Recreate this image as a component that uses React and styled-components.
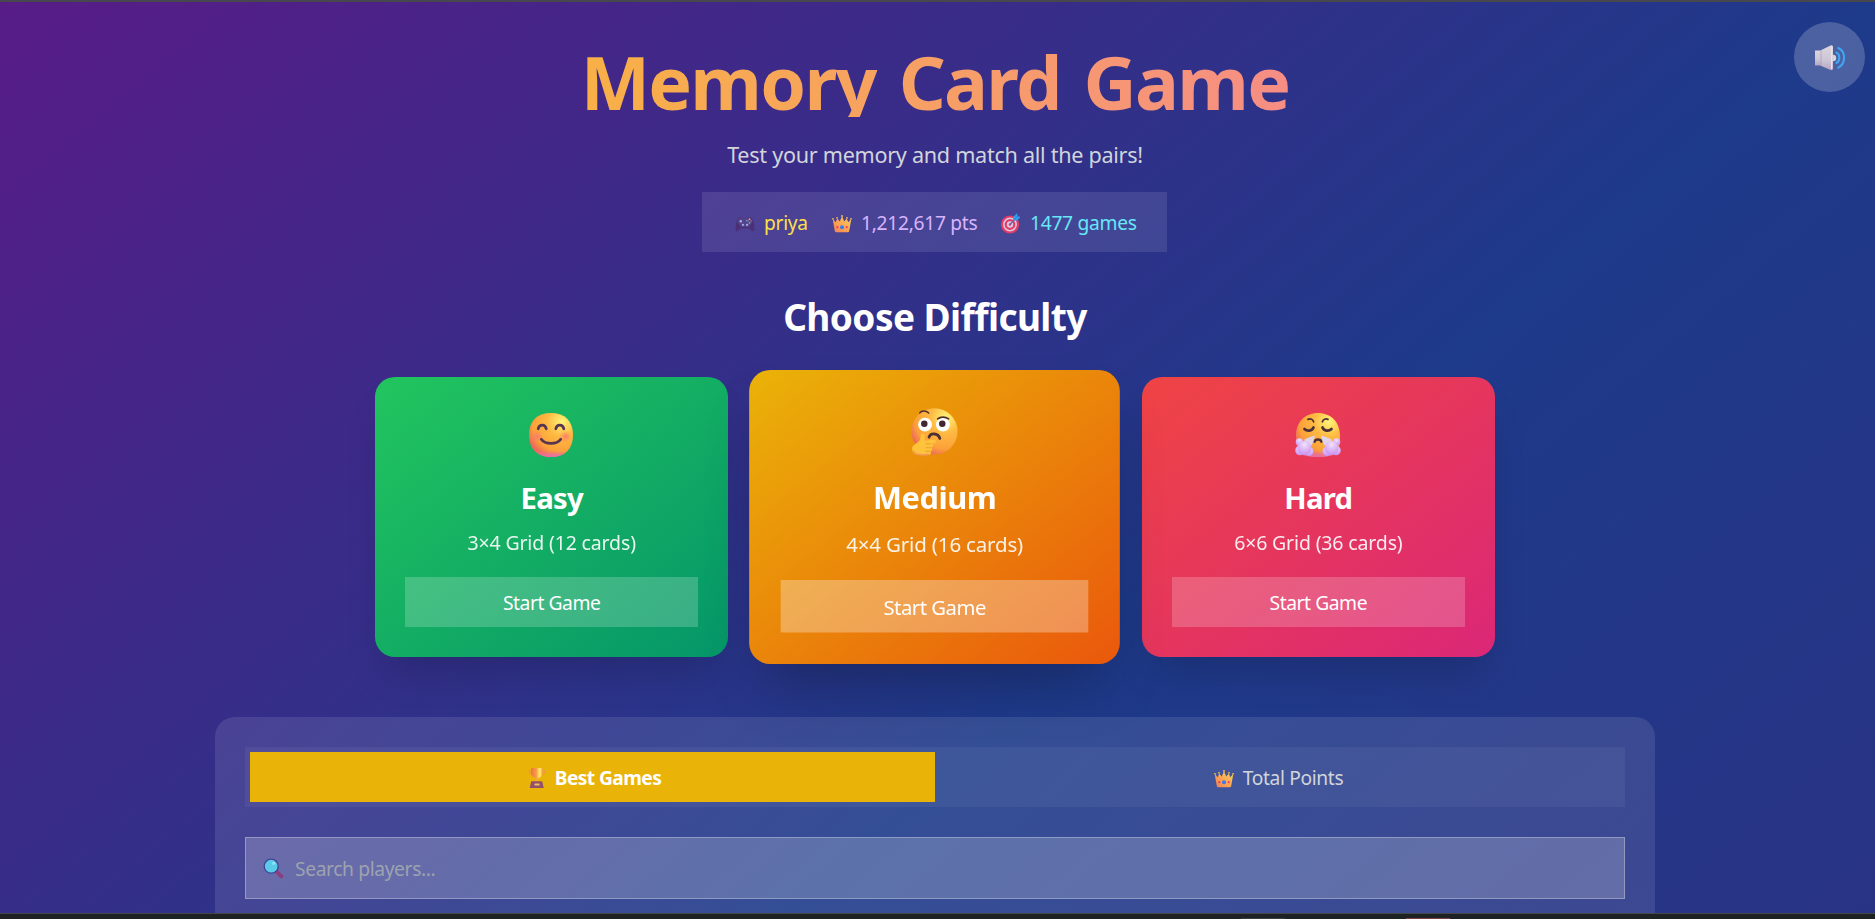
import React from 'react';
import styled, { createGlobalStyle } from 'styled-components';

const GlobalStyle = createGlobalStyle`
  * { box-sizing: border-box; }
  body {
    margin: 0;
    overflow: hidden;
    background: #1f2223;
    color: #fff;
    font-family: "Segoe UI", "Noto Sans", "Open Sans", sans-serif;
  }
  h1, h2, h3, p { margin: 0; }
  button, input { font-family: inherit; border: 0; }
`;

const Window = styled.div`
  height: 919px;
  display: flex;
  flex-direction: column;
  overflow: hidden;
`;

const TopEdge = styled.div`
  flex: none;
  height: 2px;
  background: #46484d;
`;

const Taskbar = styled.footer`
  flex: none;
  height: 6px;
  padding: 4px 425px 0 1241px;
  display: flex;
  justify-content: space-between;
  border-top: 1px solid #45474a;
  background: #1f2223;
`;

const TaskMark = styled.span`
  width: 44px;
  height: 1px;
  background: ${(p) => p.$color};
`;

const Page = styled.main`
  flex: 1;
  min-height: 0;
  overflow: hidden;
  padding: 40px 25px 0 20px;
  display: flex;
  flex-direction: column;
  align-items: center;
  background: linear-gradient(to bottom right, #581c87, #1e3a8a, #312e81) 0 0 / 1875px 1560px no-repeat;
`;

const Title = styled.h1`
  flex: none;
  width: 100%;
  height: 75px;
  margin-bottom: 20px;
  line-height: 80px;
  font-size: 73.5px;
  font-weight: 700;
  letter-spacing: -1.75px;
  word-spacing: 5.5px;
  text-align: center;
  color: transparent;
  background: linear-gradient(to right, #facc15, #f472b6);
  background-clip: text;
  -webkit-background-clip: text;
`;

const Subtitle = styled.p`
  height: 35px;
  margin-bottom: 20px;
  line-height: 35px;
  font-size: 21.6px;
  letter-spacing: -0.28px;
  color: #d1d5db;
`;

const Stats = styled.div`
  flex: none;
  width: 465px;
  height: 60px;
  margin-bottom: 40px;
  margin-right: 1px;
  padding: 1px 0 0 33px;
  display: flex;
  align-items: center;
  background: rgba(255, 255, 255, 0.1);
`;

const Stat = styled.div`
  width: ${(p) => p.$width}px;
  display: flex;
  align-items: center;
  gap: 9px;
  font-size: 19.2px;
  line-height: 30px;
  letter-spacing: -0.28px;
  white-space: nowrap;
  color: ${(p) => p.$color};
`;

const Heading = styled.h2`
  flex: none;
  height: 45px;
  margin-bottom: 40px;
  line-height: 49px;
  font-size: 37px;
  font-weight: 700;
  letter-spacing: -0.58px;
`;

const Cards = styled.section`
  flex: none;
  width: 1120px;
  margin-bottom: 60px;
  display: grid;
  grid-template-columns: repeat(3, 1fr);
  gap: 30px;
`;

const Card = styled.article`
  height: 280px;
  padding: 30px;
  display: flex;
  flex-direction: column;
  align-items: center;
  border-radius: 20px;
  background: linear-gradient(to bottom right, ${(p) => p.$from}, ${(p) => p.$to});
  box-shadow: ${(p) =>
    p.$featured
      ? '0 31px 56px -16px rgba(0, 0, 0, 0.29)'
      : '0 25px 40px -12px rgba(0, 0, 0, 0.18)'};
  transform: ${(p) => (p.$featured ? 'scale(1.05)' : 'none')};
`;

const Face = styled.div`
  height: 50px;
  margin-bottom: 20px;
  padding: ${(p) => (p.$featured ? 6 : 5)}px 1px 0 0;
  svg { display: block; }
`;

const Level = styled.h3`
  height: 40px;
  margin-bottom: 10px;
  line-height: 43px;
  font-size: 29.3px;
  font-weight: 700;
  letter-spacing: ${(p) => (p.$featured ? -0.45 : -0.75)}px;
`;

const Grid = styled.p`
  height: 30px;
  margin-bottom: 20px;
  line-height: 31px;
  font-size: 19.5px;
  letter-spacing: -0.15px;
  opacity: 0.9;
`;

const StartButton = styled.button`
  width: 100%;
  height: 50px;
  padding: 1px 0 0;
  font-size: 19.3px;
  letter-spacing: -0.45px;
  color: #fff;
  background: rgba(255, 255, 255, ${(p) => (p.$featured ? 0.3 : 0.2)});
`;

const Board = styled.section`
  flex: none;
  width: 1440px;
  height: 600px;
  padding: 30px;
  border-radius: 20px;
  background: rgba(255, 255, 255, 0.1);
`;

const Tabs = styled.div`
  height: 60px;
  margin-bottom: 30px;
  padding: 5px;
  display: grid;
  grid-template-columns: 1fr 1fr;
  background: rgba(255, 255, 255, 0.05);
`;

const Tab = styled.button`
  padding: 1px 0 0 ${(p) => (p.$active ? 4 : 2)}px;
  display: flex;
  align-items: center;
  justify-content: center;
  gap: 9px;
  font-size: 19.2px;
  font-weight: ${(p) => (p.$active ? 700 : 400)};
  letter-spacing: ${(p) => (p.$active ? -0.6 : -0.35)}px;
  color: ${(p) => (p.$active ? '#fff' : '#d1d5db')};
  background: ${(p) => (p.$active ? '#eab308' : 'transparent')};
`;

const Search = styled.label`
  height: 62px;
  padding: 1px 17px 0;
  display: flex;
  align-items: center;
  gap: 11px;
  border: 1px solid rgba(255, 255, 255, 0.3);
  background: rgba(255, 255, 255, 0.2);
`;

const SearchInput = styled.input`
  flex: 1;
  padding: 0;
  font-size: 19.3px;
  letter-spacing: -0.4px;
  color: #fff;
  background: transparent;
  outline: none;
  &::placeholder { color: #9ca3af; opacity: 1; }
`;

const SoundButton = styled.button`
  position: fixed;
  top: 22px;
  right: 10px;
  width: 71px;
  height: 70px;
  padding: 2px 0 0 0;
  display: flex;
  align-items: center;
  justify-content: center;
  border-radius: 50%;
  background: rgba(255, 255, 255, 0.2);
`;

const Defs = styled.svg`
  position: absolute;
`;

const IconDefs = () => (
  <Defs width="0" height="0" aria-hidden="true">
    <defs>
      <radialGradient id="skin" cx="0.75" cy="0.2" r="0.85">
        <stop offset="0" stopColor="#fff478" />
        <stop offset="0.4" stopColor="#ffb942" />
        <stop offset="0.8" stopColor="#fba03a" />
        <stop offset="1" stopColor="#ee6b5a" />
      </radialGradient>
      <linearGradient id="chin" x1="0" y1="0.86" x2="0" y2="1">
        <stop offset="0" stopColor="#e86fb0" stopOpacity="0" />
        <stop offset="1" stopColor="#e86fb0" />
      </linearGradient>
      <radialGradient id="blush">
        <stop offset="0" stopColor="#fb7078" stopOpacity="0.75" />
        <stop offset="1" stopColor="#fb7078" stopOpacity="0" />
      </radialGradient>
      <radialGradient id="steam" cx="0.5" cy="0.25" r="0.75">
        <stop offset="0" stopColor="#f1e2fc" />
        <stop offset="1" stopColor="#c990f1" />
      </radialGradient>
      <linearGradient id="gold" x1="0" y1="1" x2="1" y2="0">
        <stop offset="0" stopColor="#f17d55" />
        <stop offset="0.5" stopColor="#fba955" />
        <stop offset="1" stopColor="#ffd34e" />
      </linearGradient>
      <linearGradient id="cup" x1="0" x2="1">
        <stop offset="0" stopColor="#ec7440" />
        <stop offset="0.45" stopColor="#f79c43" />
        <stop offset="0.75" stopColor="#fff06c" />
        <stop offset="1" stopColor="#f29a3c" />
      </linearGradient>
      <linearGradient id="metal" x1="0" y1="0" x2="0" y2="1">
        <stop offset="0" stopColor="#dcd6df" />
        <stop offset="0.6" stopColor="#cdc5d5" />
        <stop offset="1" stopColor="#b5a6c3" />
      </linearGradient>
    </defs>
  </Defs>
);

const Smile = () => (
  <svg width="46" height="46" viewBox="0 0 46 46" fill="none">
    <path d="M23 1C37 1 45 9 45 23S37 45 23 45S1 37 1 23S9 1 23 1Z" fill="url(#skin)" />
    <path d="M23 1C37 1 45 9 45 23S37 45 23 45S1 37 1 23S9 1 23 1Z" fill="url(#chin)" />
    <circle cx="9" cy="24.5" r="6" fill="url(#blush)" />
    <circle cx="37.5" cy="24.5" r="6" fill="url(#blush)" />
    <g stroke="#583651" strokeWidth="2.8" strokeLinecap="round">
      <path d="M10.200 16.800C11.200 12 17.200 12 18.200 16.800" />
      <path d="M27.800 16.800C28.800 12 34.800 12 35.800 16.800" />
      <path d="M13.300 27.300C17 32.800 29 32.800 32.700 27.300" />
    </g>
  </svg>
);

const Thinking = () => (
  <svg width="46" height="46" viewBox="0 0 46 46" fill="none">
    <circle cx="23.500" cy="22.500" r="22" fill="url(#skin)" />
    <circle cx="14.500" cy="16" r="6.600" fill="#fff" />
    <circle cx="31.500" cy="16" r="6.600" fill="#fff" />
    <circle cx="13.800" cy="15.200" r="3.100" fill="#43282f" />
    <circle cx="30.900" cy="15.200" r="3.100" fill="#43282f" />
    <g stroke="#4f3030" strokeLinecap="round">
      <path d="M9.500 4.800C11 2.600 15.300 2.300 18 5" strokeWidth="1.500" />
      <path d="M26.500 10.600C29 8.300 34 8.300 37 10.500" strokeWidth="1.500" />
      <path d="M18.300 28C19.500 23.800 27 23.600 28.600 29.200" strokeWidth="2.700" />
    </g>
    <path d="M10.500 26C10.500 23.800 14.300 23.800 14.300 26.500L14 31.300L22.500 30.500C25.500 30.300 25.700 33.500 23 33.900L20.500 34.300C23 34.800 22.500 37.500 20.400 37.800C22 38.500 21.500 41 19.800 41.400C21 42.500 20 45 17.300 45H10C4.500 45 2 42 2.200 38.500C2.300 35 8.500 33.500 10 30Z" fill="#fdc43b" />
    <path d="M3 41C6 45 13 45.500 18 44" stroke="#f79a62" strokeWidth="1.400" />
    <path d="M15 34.500L20.500 34.200M15 38H20.300M15 41.400H19.700" stroke="#ef9b32" strokeWidth="1" />
  </svg>
);

const Huffing = () => (
  <svg width="46" height="46" viewBox="0 0 46 46" fill="none">
    <path d="M23 1C36 1 45 10 45 24C45 36 43 43 34 44Q23 46 12 44C3 43 1 36 1 24C1 10 10 1 23 1Z" fill="url(#skin)" />
    <path d="M23 1C36 1 45 10 45 24C45 36 43 43 34 44Q23 46 12 44C3 43 1 36 1 24C1 10 10 1 23 1Z" fill="url(#chin)" />
    <g stroke="#4b3038" strokeLinecap="round">
      <path d="M13 7.400C15.500 6.300 18 7.300 18.600 9.800" strokeWidth="1.700" />
      <path d="M33 7.400C30.500 6.300 28 7.300 27.400 9.800" strokeWidth="1.700" />
      <path d="M9.500 17C12 19.500 17 19.300 18.500 15.500" strokeWidth="2.700" />
      <path d="M36.500 17C34 19.500 29 19.300 27.500 15.500" strokeWidth="2.700" />
      <path d="M19.500 29.500C20.500 26.800 25.500 26.800 26.500 29.500" strokeWidth="2.700" />
    </g>
    <path d="M19.800 23.500C17 24 12 26 9 28L15 35C18 32 19.500 27 19.800 23.500Z" fill="#e0d4e8" />
    <path d="M26.200 23.500C29 24 34 26 37 28L31 35C28 32 26.500 27 26.200 23.500Z" fill="#e0d4e8" />
    <g fill="url(#steam)">
      <circle cx="4.500" cy="30" r="3.800" />
      <circle cx="5" cy="38.500" r="4.800" />
      <circle cx="14" cy="39.500" r="4.500" />
      <circle cx="9.500" cy="36" r="7" />
      <circle cx="41.500" cy="30" r="3.800" />
      <circle cx="41" cy="38.500" r="4.800" />
      <circle cx="32" cy="39.500" r="4.500" />
      <circle cx="36.500" cy="36" r="7" />
    </g>
  </svg>
);

const Gamepad = () => (
  <svg width="20" height="20" viewBox="0 0 20 20">
    <path d="M3.500 4.800Q4.500 4 6 4.300L7.500 5H12.500L14 4.300Q15.500 4 16.500 4.800C18.500 8 20 13 19.300 16.500C19 18.500 17.300 18.700 16.200 17.200L14 15.200H6L3.800 17.200C2.700 18.700 1 18.500 .7 16.500C0 13 1.500 8 3.500 4.800Z" fill="#4c2f76" />
    <path d="M3.500 5.500Q5 4.500 6.500 5.200H13.500Q15 4.500 16.500 5.500L17.500 9L14 14H6L2.500 9Z" fill="#54438a" />
    <g fill="#9db0e8">
      <circle cx="5.800" cy="8.200" r="1.200" />
      <circle cx="8" cy="11.800" r="1.100" />
      <circle cx="12.100" cy="11.800" r="1.100" />
      <circle cx="11.800" cy="7.600" r=".7" />
    </g>
    <circle cx="14.500" cy="6.200" r=".9" fill="#e8a34b" />
    <circle cx="13" cy="8" r=".8" fill="#438ee8" />
    <circle cx="16" cy="8" r=".8" fill="#ef536a" />
    <circle cx="14.500" cy="9.800" r=".9" fill="#42cb94" />
  </svg>
);

const Crown = () => (
  <svg width="20" height="20" viewBox="0 0 20 20">
    <path d="M.7 6L3.800 9.200L5.200 5.500L7.800 8.600L10 3L12.200 8.600L14.800 5.500L16.200 9.200L19.300 6L17.200 18Q17 19.300 15.700 19.300H4.300Q3 19.300 2.800 18Z" fill="url(#gold)" />
    <g fill="#f8c14c">
      <circle cx="1" cy="5.800" r=".9" />
      <circle cx="5" cy="4.800" r=".9" />
      <circle cx="10" cy="3" r=".9" />
      <circle cx="15" cy="4.800" r=".9" />
      <circle cx="19" cy="5.800" r=".9" />
    </g>
    <circle cx="10" cy="14.200" r="2" fill="#387ceb" />
    <circle cx="5.300" cy="14.200" r="1.100" fill="#f43b68" />
    <circle cx="14.700" cy="14.200" r="1.100" fill="#f43b68" />
  </svg>
);

const Target = () => (
  <svg width="20" height="22" viewBox="0 0 20 22" fill="none">
    <circle cx="9" cy="12.500" r="8" fill="#d9cbe4" stroke="#e53b65" strokeWidth="2.200" />
    <circle cx="9" cy="12.500" r="4.300" stroke="#e53b65" strokeWidth="2.200" />
    <circle cx="9" cy="12.500" r="1.300" fill="#e53b65" />
    <path d="M9 12.500L15 6" stroke="#7a5da5" strokeWidth="1.300" />
    <path d="M12 8.300L12.300 5L16 1.300L16.600 4.200L19.500 4.900L15.800 8.500Z" fill="#32a2f2" />
    <path d="M12.500 8L17 3.800" stroke="#236ccc" strokeWidth=".8" />
  </svg>
);

const Trophy = () => (
  <svg width="18" height="20" viewBox="0 0 18 20" fill="none">
    <path d="M4 2.600H1.300Q1.300 6.500 5.500 7M14 2.600H16.800Q16.800 6.500 12.500 7" stroke="#f0983c" strokeWidth="1.300" />
    <path d="M3 0H14.800V4C14.800 8 12 10 9.700 10.300V13.500H8.100V10.300C5.800 10 3 8 3 4Z" fill="url(#cup)" />
    <path d="M3.200 13.200H14.200L15.700 20H1.700Z" fill="#93506a" />
    <rect x="6.500" y="15.500" width="5" height="2" rx=".5" fill="#f2bf63" />
  </svg>
);

const Magnifier = () => (
  <svg width="21" height="21" viewBox="0 0 21 21" fill="none">
    <path d="M13 13L18.500 18.500" stroke="#8c3d7d" strokeWidth="3.800" strokeLinecap="round" />
    <circle cx="8.200" cy="8.200" r="7" fill="#5bcbea" stroke="#3f4395" strokeWidth="1.300" />
    <circle cx="10.700" cy="5.300" r="1.600" fill="#8be5f6" />
  </svg>
);

const Speaker = () => (
  <svg width="30" height="26" viewBox="0 0 30 26" fill="none">
    <circle cx="18" cy="13" r="3.200" fill="#d9d3df" />
    <path d="M0 5.500H6.500V20.500H0Z" fill="url(#metal)" />
    <path d="M5.800 5.300L15.500 .5Q18 -.3 18 2V23.500Q18 25.600 15.500 25L5.800 20.700Z" fill="url(#metal)" />
    <path d="M16.700 1.500V24" stroke="#e6e2ea" strokeWidth="1.400" />
    <path d="M6 5.500V20.500" stroke="#aaa1ba" strokeWidth=".8" />
    <path d="M21.500 7.600C25.300 9.300 25.300 16 21.500 18" stroke="#3fa7f3" strokeWidth="2" strokeLinecap="round" />
    <path d="M23.300 3C31 6.500 31 18.500 23.300 22.700" stroke="#3fa7f3" strokeWidth="2" strokeLinecap="round" />
  </svg>
);

const levels = [
  { name: 'Easy', grid: '3×4 Grid (12 cards)', from: '#22c55e', to: '#059669', Icon: Smile },
  { name: 'Medium', grid: '4×4 Grid (16 cards)', from: '#eab308', to: '#ea580c', Icon: Thinking, featured: true },
  { name: 'Hard', grid: '6×6 Grid (36 cards)', from: '#ef4444', to: '#db2777', Icon: Huffing },
];

export default function App() {
  return (
    <Window>
      <GlobalStyle />
      <IconDefs />
      <TopEdge />
      <Page>
        <Title>Memory Card Game</Title>
        <Subtitle>Test your memory and match all the pairs!</Subtitle>
        <Stats>
          <Stat $width={97} $color="#fde047"><Gamepad />priya</Stat>
          <Stat $width={169} $color="#d8b4fe"><Crown />1,212,617 pts</Stat>
          <Stat $width={137} $color="#67e8f9"><Target />1477 games</Stat>
        </Stats>
        <Heading>Choose Difficulty</Heading>
        <Cards>
          {levels.map(({ name, grid, from, to, Icon, featured }) => (
            <Card key={name} $from={from} $to={to} $featured={featured}>
              <Face $featured={featured}><Icon /></Face>
              <Level $featured={featured}>{name}</Level>
              <Grid>{grid}</Grid>
              <StartButton $featured={featured}>Start Game</StartButton>
            </Card>
          ))}
        </Cards>
        <Board>
          <Tabs>
            <Tab $active><Trophy />Best Games</Tab>
            <Tab><Crown />Total Points</Tab>
          </Tabs>
          <Search>
            <Magnifier />
            <SearchInput placeholder="Search players..." />
          </Search>
        </Board>
      </Page>
      <Taskbar>
        <TaskMark $color="#3b3d3e" />
        <TaskMark $color="#7b3f43" />
      </Taskbar>
      <SoundButton aria-label="Toggle sound"><Speaker /></SoundButton>
    </Window>
  );
}
